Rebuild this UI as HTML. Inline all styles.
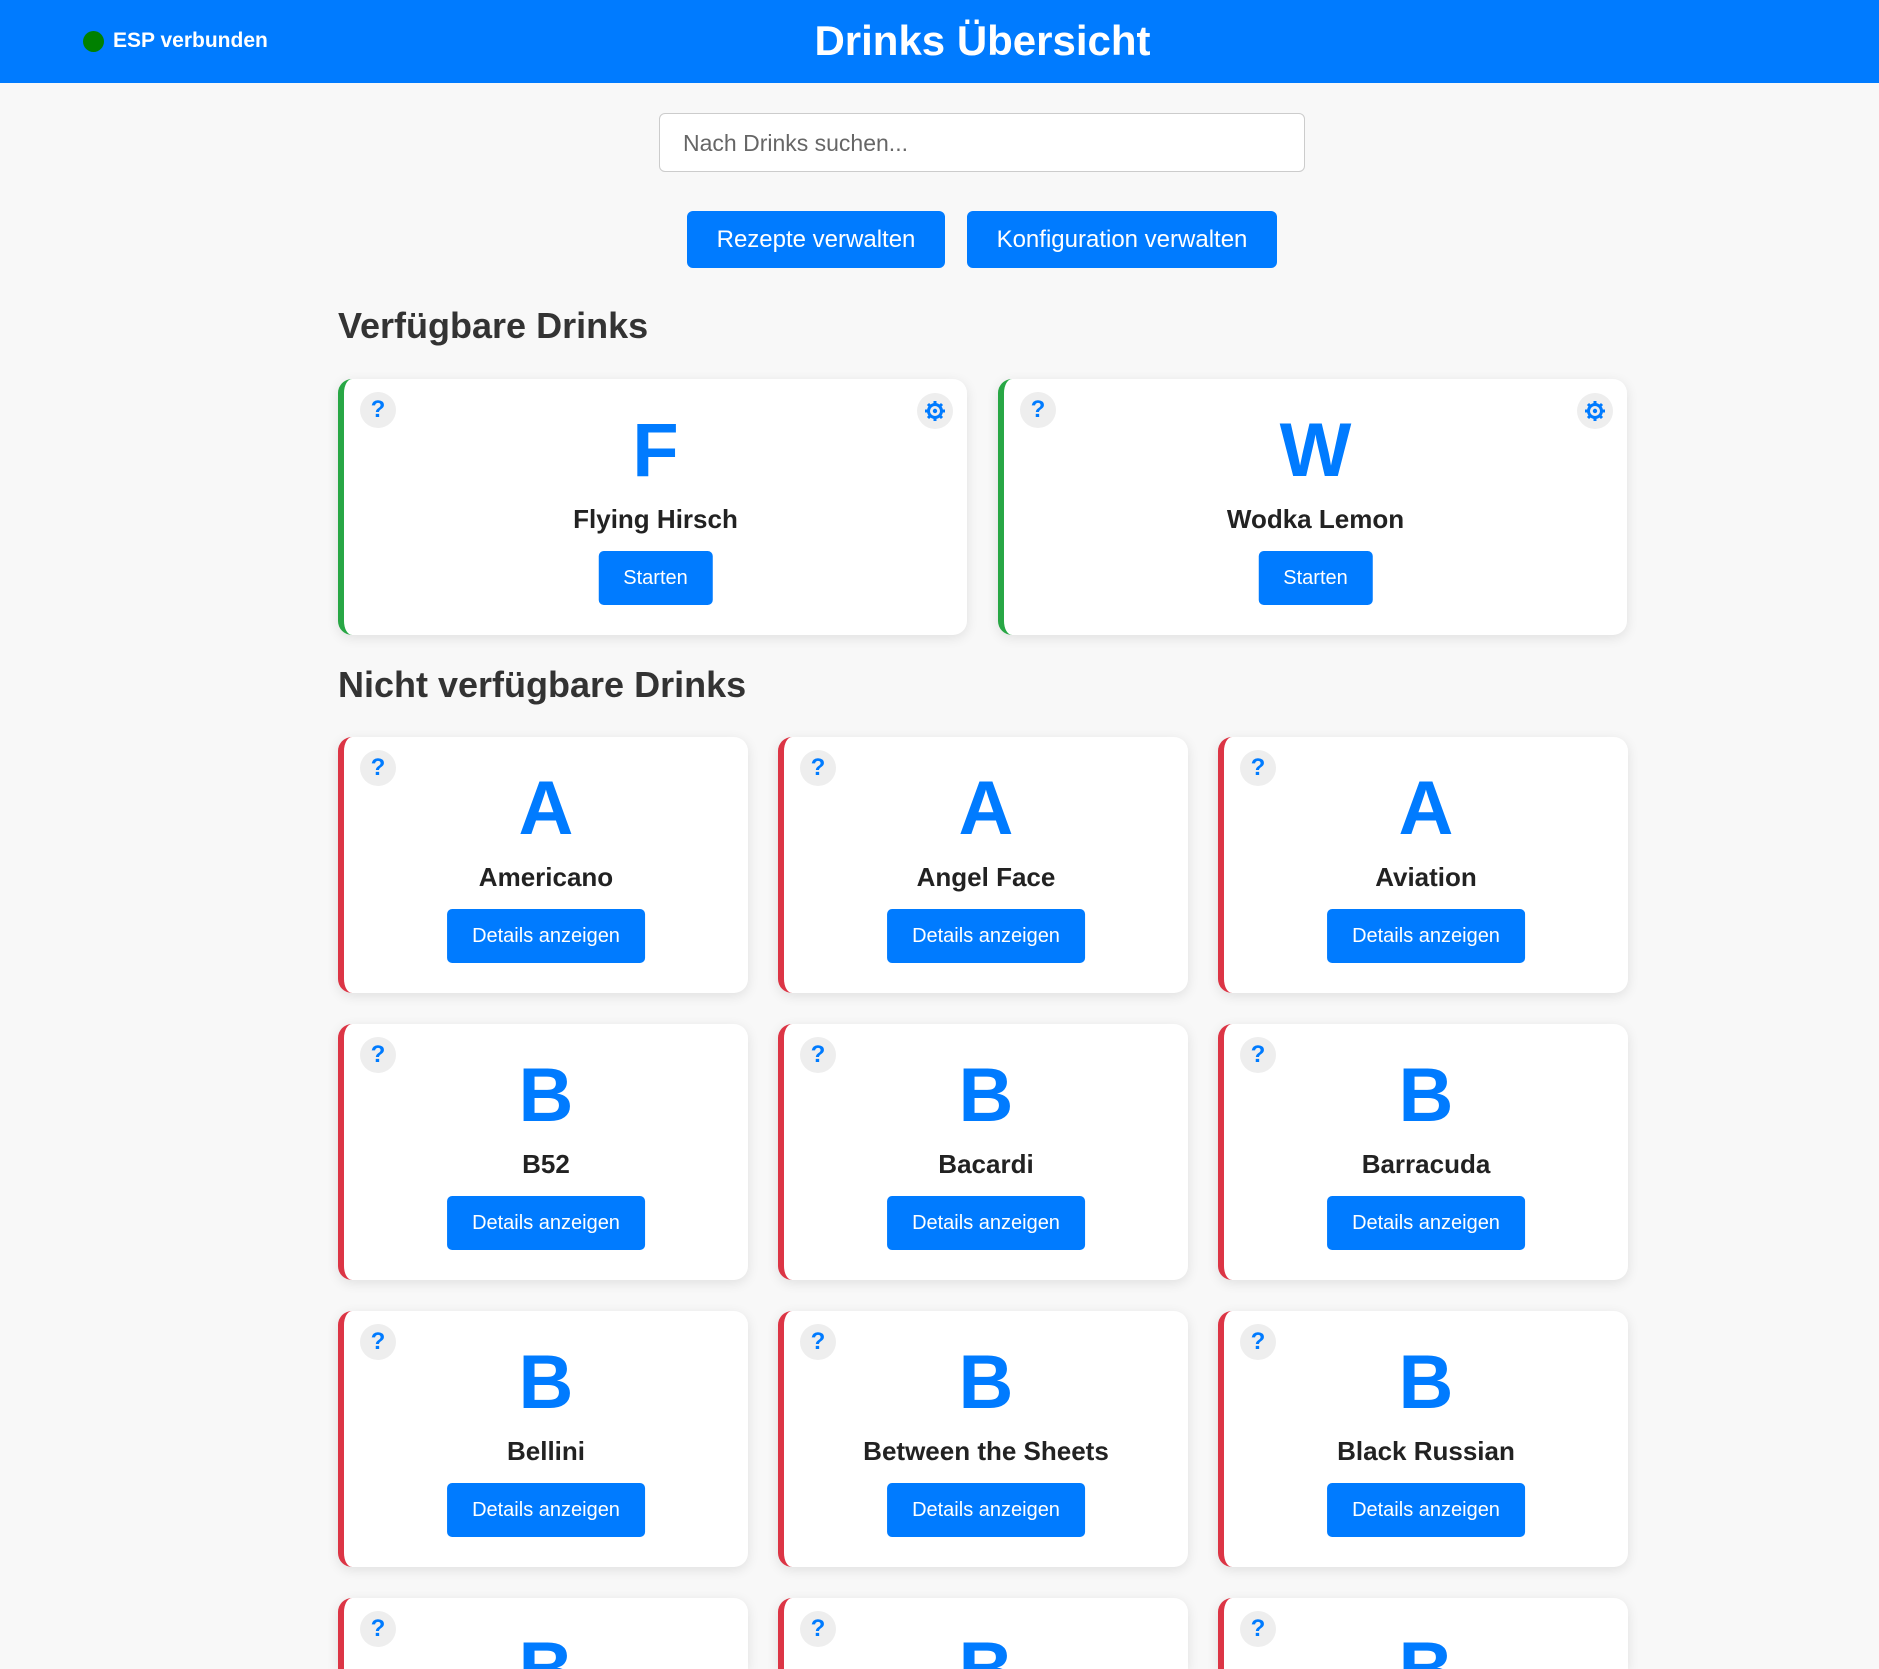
<!DOCTYPE html>
<html style="height:1669px;overflow:hidden"><head><meta charset="utf-8"><style>
*{box-sizing:border-box;margin:0;padding:0}
body{width:1879px;height:1669px;background:#f8f8f8;font-family:"Liberation Sans",Arial,sans-serif;position:relative;overflow:hidden}
.wrap{position:absolute;left:0;top:0;width:1879px;height:1669px;overflow:hidden}
.hdr{position:absolute;left:0;top:0;width:1879px;height:83px;background:#007bff}
.dot{position:absolute;left:83px;top:31px;width:21px;height:21px;border-radius:50%;background:#008000}
.esp{position:absolute;left:113px;top:29px;color:#fff;font-weight:bold;font-size:21px;line-height:24px}
.title{position:absolute;left:0;right:0;top:17px;text-align:center;color:#fff;font-weight:bold;font-size:42px;line-height:48px;padding-left:86px}
.search{position:absolute;left:659px;top:113px;width:646px;height:59px;border:1px solid #ccc;border-radius:6px;background:#fff;font-size:23px;color:#666;padding:16px 23px;line-height:26px}
.btn{position:absolute;background:#007bff;color:#fff;border-radius:6px;text-align:center;font-size:24px}
.h2{position:absolute;left:338px;font-weight:bold;font-size:36px;color:#333;line-height:40px}
.card{position:absolute;background:#fff;border-radius:14px;height:256px;box-shadow:0 3px 12px rgba(0,0,0,.1);border-left:6px solid #dc3545;overflow:hidden}
.card.last{height:71px;border-radius:14px 14px 0 0}
.card.g{border-left-color:#28a745}
.q{position:absolute;left:16px;top:13px;width:36px;height:36px;border-radius:50%;background:#eee;color:#007bff;font-weight:bold;font-size:24px;line-height:36px;text-align:center}
.gear{position:absolute;right:14px;top:14px;width:36px;height:36px;border-radius:50%;background:#eee}
.L{position:absolute;left:0;right:0;top:34px;text-align:center;color:#007bff;font-weight:bold;font-size:76px;line-height:76px}
.n{position:absolute;left:0;right:0;top:125px;text-align:center;color:#222;font-weight:bold;font-size:26px;line-height:30px}
.b{position:absolute;left:50%;transform:translateX(-50%);top:172px;height:54px;background:#007bff;color:#fff;border-radius:5px;font-size:20px;line-height:54px;padding:0 25px;white-space:nowrap}
</style></head><body><div class="wrap">
<div class="hdr"><div class="dot"></div><div class="esp">ESP verbunden</div><div class="title">Drinks Übersicht</div></div>
<div class="search">Nach Drinks suchen...</div>
<div class="btn" style="left:687px;top:211px;width:258px;height:57px;line-height:57px">Rezepte verwalten</div>
<div class="btn" style="left:967px;top:211px;width:310px;height:57px;line-height:57px">Konfiguration verwalten</div>
<div class="h2" style="top:306px">Verfügbare Drinks</div>
<div class="h2" style="top:665px">Nicht verfügbare Drinks</div>

<div class="card g" style="left:338px;top:379px;width:629px"><div class="q">?</div><div class="gear"><svg width="36" height="36" viewBox="0 0 36 36"><g fill="none" stroke="#007bff" stroke-width="3"><circle cx="18" cy="18" r="6.5"/></g><circle cx="18" cy="18" r="2.2" fill="#007bff"/><g stroke="#007bff" stroke-width="3"><path d="M18 8v3M18 25v3M8 18h3M25 18h3M11 11l2 2M23 23l2 2M25 11l-2 2M11 25l2-2"/></g></svg></div><div class="L">F</div><div class="n">Flying Hirsch</div><div class="b">Starten</div></div>
<div class="card g" style="left:998px;top:379px;width:629px"><div class="q">?</div><div class="gear"><svg width="36" height="36" viewBox="0 0 36 36"><g fill="none" stroke="#007bff" stroke-width="3"><circle cx="18" cy="18" r="6.5"/></g><circle cx="18" cy="18" r="2.2" fill="#007bff"/><g stroke="#007bff" stroke-width="3"><path d="M18 8v3M18 25v3M8 18h3M25 18h3M11 11l2 2M23 23l2 2M25 11l-2 2M11 25l2-2"/></g></svg></div><div class="L">W</div><div class="n">Wodka Lemon</div><div class="b">Starten</div></div>

<div class="card" style="left:338px;top:737px;width:410px"><div class="q">?</div><div class="L">A</div><div class="n">Americano</div><div class="b">Details anzeigen</div></div>
<div class="card" style="left:778px;top:737px;width:410px"><div class="q">?</div><div class="L">A</div><div class="n">Angel Face</div><div class="b">Details anzeigen</div></div>
<div class="card" style="left:1218px;top:737px;width:410px"><div class="q">?</div><div class="L">A</div><div class="n">Aviation</div><div class="b">Details anzeigen</div></div>

<div class="card" style="left:338px;top:1024px;width:410px"><div class="q">?</div><div class="L">B</div><div class="n">B52</div><div class="b">Details anzeigen</div></div>
<div class="card" style="left:778px;top:1024px;width:410px"><div class="q">?</div><div class="L">B</div><div class="n">Bacardi</div><div class="b">Details anzeigen</div></div>
<div class="card" style="left:1218px;top:1024px;width:410px"><div class="q">?</div><div class="L">B</div><div class="n">Barracuda</div><div class="b">Details anzeigen</div></div>

<div class="card" style="left:338px;top:1311px;width:410px"><div class="q">?</div><div class="L">B</div><div class="n">Bellini</div><div class="b">Details anzeigen</div></div>
<div class="card" style="left:778px;top:1311px;width:410px"><div class="q">?</div><div class="L">B</div><div class="n">Between the Sheets</div><div class="b">Details anzeigen</div></div>
<div class="card" style="left:1218px;top:1311px;width:410px"><div class="q">?</div><div class="L">B</div><div class="n">Black Russian</div><div class="b">Details anzeigen</div></div>

<div class="card last" style="left:338px;top:1598px;width:410px"><div class="q">?</div><div class="L">B</div></div>
<div class="card last" style="left:778px;top:1598px;width:410px"><div class="q">?</div><div class="L">B</div></div>
<div class="card last" style="left:1218px;top:1598px;width:410px"><div class="q">?</div><div class="L">B</div></div>
</div></body></html>
